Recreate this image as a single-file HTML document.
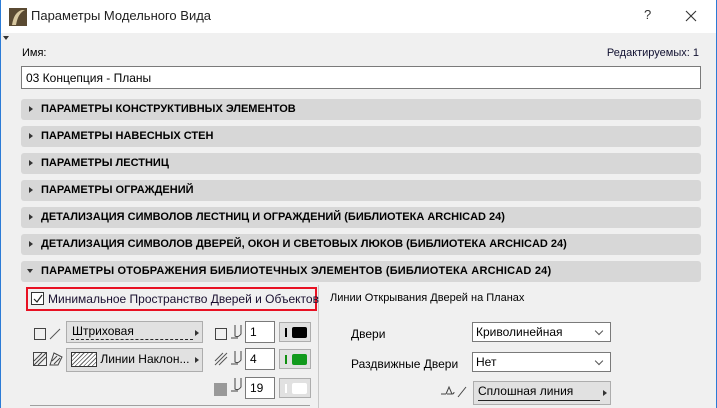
<!DOCTYPE html>
<html><head><meta charset="utf-8"><style>
*{box-sizing:border-box;margin:0;padding:0}
body{width:717px;height:408px;overflow:hidden;background:#f0f0f0;font-family:"Liberation Sans","DejaVu Sans",sans-serif;font-size:12px;color:#000;position:relative}
.a{position:absolute;white-space:nowrap}
.title{left:0;top:0;width:717px;height:33px;background:#fff}
.sec{left:21px;width:680px;height:21px;background:#d7d7d7;border-radius:3px;font-weight:bold;font-size:11px;line-height:21px;padding-left:20px}
.sec:before{content:"";position:absolute;left:8px;top:7px;border-left:4px solid #333;border-top:3.5px solid transparent;border-bottom:3.5px solid transparent}
.sec.o:before{left:6px;top:8px;border-top:4px solid #333;border-left:3.5px solid transparent;border-right:3.5px solid transparent;border-bottom:0}
.box{background:#fff;border:1px solid #7a7a7a}
.btn{background:#e1e1e1;border:1px solid #adadad}
.dd:after{content:"";position:absolute;right:8px;top:5px;width:5px;height:5px;border-right:1px solid #555;border-bottom:1px solid #555;transform:rotate(45deg)}
.arr:after{content:"";position:absolute;right:3px;top:8px;border-left:4px solid #333;border-top:3.5px solid transparent;border-bottom:3.5px solid transparent}
</style></head><body>
<div class="a title"></div>
<div class="a" style="left:0;top:0;width:1px;height:408px;background:#2b7bd6"></div>
<div class="a" style="left:716px;top:0;width:1px;height:408px;background:#2b7bd6"></div>
<svg class="a" style="left:9px;top:8px" width="18" height="18"><rect width="18" height="18" fill="#5a4a32"/><path d="M3 17 Q5 4 13 2 L16 2 Q9 5 7 17Z" fill="#d8c8a0"/></svg>
<div class="a" style="left:31px;top:8px;font-size:13px;color:#222">Параметры Модельного Вида</div>
<div class="a" style="left:644px;top:7px;font-size:13px;color:#333">?</div>
<svg class="a" style="left:685px;top:10px" width="12" height="12"><path d="M1 1L11 11M11 1L1 11" stroke="#333" stroke-width="1.1"/></svg>
<div class="a" style="left:3px;top:36px;border-top:4px solid #333;border-left:3px solid transparent;border-right:3px solid transparent"></div>
<div class="a" style="left:22px;top:47px;font-size:11px">Имя:</div>
<div class="a" style="right:18px;top:47px;font-size:11px;color:#101030">Редактируемых: 1</div>
<div class="a box" style="left:21px;top:66px;width:680px;height:23px;padding:4px 4px;font-size:12px">03 Концепция - Планы</div>
<div class="a sec" style="top:99px">ПАРАМЕТРЫ КОНСТРУКТИВНЫХ ЭЛЕМЕНТОВ</div>
<div class="a sec" style="top:126px">ПАРАМЕТРЫ НАВЕСНЫХ СТЕН</div>
<div class="a sec" style="top:153px">ПАРАМЕТРЫ ЛЕСТНИЦ</div>
<div class="a sec" style="top:180px">ПАРАМЕТРЫ ОГРАЖДЕНИЙ</div>
<div class="a sec" style="top:207px">ДЕТАЛИЗАЦИЯ СИМВОЛОВ ЛЕСТНИЦ И ОГРАЖДЕНИЙ (БИБЛИОТЕКА ARCHICAD 24)</div>
<div class="a sec" style="top:234px">ДЕТАЛИЗАЦИЯ СИМВОЛОВ ДВЕРЕЙ, ОКОН И СВЕТОВЫХ ЛЮКОВ (БИБЛИОТЕКА ARCHICAD 24)</div>
<div class="a sec o" style="top:261px;letter-spacing:0.2px">ПАРАМЕТРЫ ОТОБРАЖЕНИЯ БИБЛИОТЕЧНЫХ ЭЛЕМЕНТОВ (БИБЛИОТЕКА ARCHICAD 24)</div>
<div class="a" style="left:318px;top:285px;width:1px;height:123px;background:#c8c8c8"></div>
<div class="a" style="left:30px;top:405px;width:280px;height:1px;background:#a0a0a0"></div>
<div class="a" style="left:26px;top:287px;width:291px;height:24px;border:2px solid #e81123"></div>
<div class="a" style="left:31px;top:292px;width:13px;height:13px;border:1px solid #333;background:#fff"></div>
<svg class="a" style="left:32px;top:293px" width="12" height="12"><path d="M2 6L5 9L10 2" stroke="#222" fill="none" stroke-width="1.2"/></svg>
<div class="a" style="left:48px;top:292px;font-size:12px;color:#1a1030">Минимальное Пространство Дверей и Объектов</div>
<div class="a" style="left:330px;top:292px;font-size:11px">Линии Открывания Дверей на Планах</div>
<div class="a" style="left:34px;top:328px;width:12px;height:12px;border:1px solid #444"></div>
<svg class="a" style="left:49px;top:328px" width="12" height="12"><path d="M1 11L11 1" stroke="#555"/></svg>
<div class="a btn arr" style="left:66px;top:321px;width:137px;height:22px;padding:2px 5px;font-size:12px">Штриховая<div style="position:absolute;left:4px;top:17px;width:122px;border-top:1.5px dashed #222"></div></div>
<div class="a" style="left:215px;top:328px;width:12px;height:12px;border:1px solid #444"></div>
<svg class="a" style="left:230px;top:324px" width="14" height="18"><path d="M5 1V12Q8 14 11 10V1M1 14H8" stroke="#444" fill="none"/></svg>
<div class="a box" style="left:245px;top:321px;width:30px;height:22px;padding:3px 4px">1</div>
<div class="a btn" style="left:279px;top:322px;width:32px;height:20px"><div style="position:absolute;left:5px;top:5px;width:2px;height:9px;background:#000"></div><div style="position:absolute;left:12px;top:4px;width:15px;height:11px;background:#000;border-radius:2px"></div></div>
<svg class="a" style="left:33px;top:352px" width="14" height="14"><rect x=".5" y=".5" width="13" height="13" fill="none" stroke="#444"/><path d="M1 9L9 1M1 13L13 1M5 13L13 5" stroke="#444"/></svg>
<svg class="a" style="left:49px;top:352px" width="14" height="14"><path d="M1 13L5 1L13 5L9 13Z" fill="none" stroke="#444"/><path d="M3 9L8 4M5 12L11 6" stroke="#444"/></svg>
<div class="a btn arr" style="left:66px;top:348px;width:137px;height:24px;padding:3px 4px;font-size:12px"><span style="display:inline-block;width:26px;height:15px;border:1px solid #333;background:repeating-linear-gradient(135deg,#fff 0 2px,#666 2px 3px);vertical-align:middle"></span> Линии Наклон...</div>
<svg class="a" style="left:214px;top:352px" width="14" height="14"><path d="M1 9L9 1M1 13L13 1M5 13L13 5" stroke="#555"/></svg>
<svg class="a" style="left:230px;top:350px" width="14" height="18"><path d="M5 1V12Q8 14 11 10V1M1 14H8" stroke="#444" fill="none"/></svg>
<div class="a box" style="left:245px;top:348px;width:30px;height:22px;padding:3px 4px">4</div>
<div class="a btn" style="left:279px;top:349px;width:32px;height:20px"><div style="position:absolute;left:5px;top:5px;width:2px;height:9px;background:#109010"></div><div style="position:absolute;left:12px;top:4px;width:15px;height:11px;background:#119a1c;border-radius:2px"></div></div>
<div class="a" style="left:214px;top:383px;width:13px;height:13px;background:#999"></div>
<svg class="a" style="left:230px;top:377px" width="14" height="18"><path d="M5 1V12Q8 14 11 10V1M1 14H8" stroke="#444" fill="none"/></svg>
<div class="a box" style="left:245px;top:377px;width:30px;height:22px;padding:3px 4px">19</div>
<div class="a btn" style="left:279px;top:378px;width:32px;height:20px"><div style="position:absolute;left:5px;top:5px;width:2px;height:9px;background:#fff"></div><div style="position:absolute;left:12px;top:4px;width:15px;height:11px;background:#fff;border-radius:2px"></div></div>
<div class="a" style="left:351px;top:327px;font-size:12px">Двери</div>
<div class="a box dd" style="left:472px;top:322px;width:139px;height:20px;padding:2px 3px;font-size:12px">Криволинейная</div>
<div class="a" style="left:351px;top:357px;font-size:12px">Раздвижные Двери</div>
<div class="a box dd" style="left:472px;top:352px;width:139px;height:20px;padding:2px 3px;font-size:12px">Нет</div>
<svg class="a" style="left:440px;top:384px" width="28" height="14"><path d="M1 10H6M6 10L9 3L12 10H7M12 10Q14 10 14 8M18 13L26 3" stroke="#444" fill="none"/></svg>
<div class="a btn arr" style="left:473px;top:381px;width:138px;height:24px;padding:2px 4px;font-size:12px">Сплошная линия<div style="position:absolute;left:4px;top:18px;width:122px;border-top:1.5px solid #222"></div></div>
</body></html>
